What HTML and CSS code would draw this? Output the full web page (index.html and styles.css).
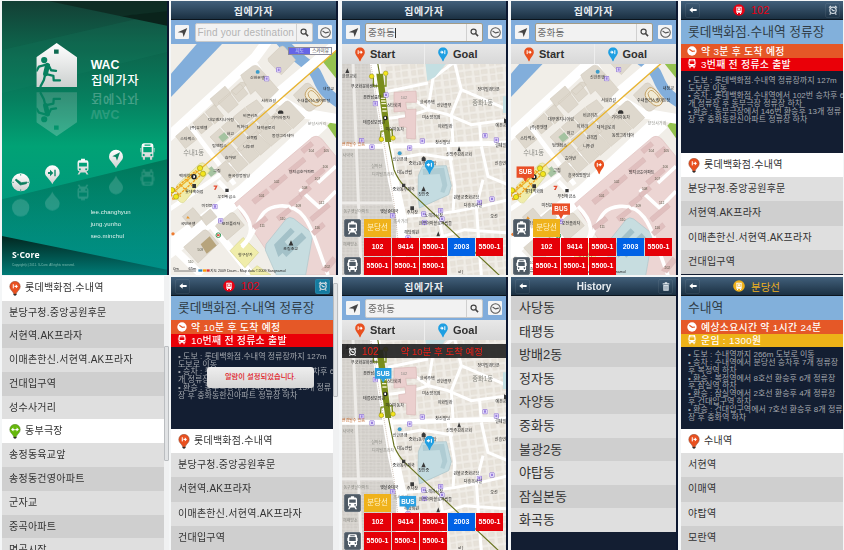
FILE: index.html
```html
<!DOCTYPE html>
<html lang="ko">
<head>
<meta charset="utf-8">
<title>WAC 집에가자</title>
<link rel="stylesheet" href="styles.css">
</head>
<body>
<svg class="defs" width="0" height="0" aria-hidden="true">
  <defs>
    <linearGradient id="green" x1="0" y1="0" x2="0" y2="1"><stop offset="0" stop-color="#143f35"/><stop offset=".15" stop-color="#0e6049"/><stop offset=".36" stop-color="#06805f"/><stop offset=".53" stop-color="#01a275"/><stop offset="1" stop-color="#008d87"/></linearGradient>
    <linearGradient id="shade" x1="0" y1="0" x2="0" y2="1"><stop offset="0" stop-color="#00694e" stop-opacity=".75"/><stop offset="1" stop-color="#009088" stop-opacity=".4"/></linearGradient>
    <linearGradient id="foot" x1="0" y1="0" x2="0" y2="1"><stop offset="0" stop-color="#02261f"/><stop offset="1" stop-color="#007b76"/></linearGradient>
    <linearGradient id="silver" x1="0" y1="0" x2="0" y2="1"><stop offset="0" stop-color="#fff"/><stop offset="1" stop-color="#ccd0cf"/></linearGradient>
    <pattern id="lots" width="23" height="19" patternUnits="userSpaceOnUse"><rect width="23" height="19" fill="#dedbd7"/><path d="M2 2h8v6H2zM13 2h8v7h-8zM2 11h9v6H2zM14 12h7v5h-7z" fill="#d1cec9" stroke="#c5c2bc" stroke-width=".7"/></pattern>
    <pattern id="homes" width="47" height="43" patternUnits="userSpaceOnUse" patternTransform="rotate(-7)"><path d="M3 4h15v14H3zM24 3h18v13H24zM4 24h13v14H4zM24 23h15v15H24z" fill="#e7e2d9" stroke="#dcd6cc" stroke-width="1"/></pattern>
  </defs>
  <symbol id="pin" viewBox="0 0 30 44"><path d="M15 .5A14.5 14.5 0 0 1 29.5 15C29.500 24 20 29 17 40q-2 6-4 0C10 29 .5 24 .5 15A14.500 14.500 0 0 1 15 .5z"/></symbol>
  <symbol id="g-start" viewBox="0 0 20 14"><path d="M3 1h3v12H3zM8 5h4V1l6 6-6 6V9H8z" fill="#fff"/></symbol>
  <symbol id="g-goal" viewBox="0 0 20 14"><path d="M2 5h4V1l6 6-6 6V9H2zM14 1h3v12h-3z" fill="#fff"/></symbol>
  <symbol id="p-start" viewBox="0 0 30 44"><use href="#pin" width="30" height="44" fill="#e9501f"/><use href="#g-start" x="5" y="8" width="20" height="14"/></symbol>
  <symbol id="p-goal" viewBox="0 0 30 44"><use href="#pin" width="30" height="44" fill="#1f9fe2"/><use href="#g-goal" x="5" y="8" width="20" height="14"/></symbol>
  <symbol id="p-list" viewBox="0 0 36 46"><circle cx="18" cy="41" r="4.500" fill="#222"/><path d="M18 1A16 16 0 0 1 34 17C34 27 25 30 21 40h-6C11 30 2 27 2 17A16 16 0 0 1 18 1z" fill="#e9501f" stroke="#81412c" stroke-width="1.500"/><use href="#g-start" x="8" y="9" width="21" height="15"/></symbol>
  <symbol id="p-mid" viewBox="0 0 36 46"><circle cx="18" cy="41" r="4.500" fill="#222"/><path d="M18 1A16 16 0 0 1 34 17C34 27 25 30 21 40h-6C11 30 2 27 2 17A16 16 0 0 1 18 1z" fill="#66b80b" stroke="#4b771d" stroke-width="1.500"/><path d="M6 17l7-6v4h4v4h-4v4zM30 17l-7-6v4h-4v4h4v4z" fill="#fff"/></symbol>
  <symbol id="arrow" viewBox="0 0 30 30"><path d="M28 3L18 27l-3-11L2 14z"/></symbol>
  <symbol id="lens" viewBox="0 0 30 30"><circle cx="12" cy="12" r="8.500" fill="none" stroke="#444" stroke-width="4"/><path d="M18 18l9 9" stroke="#444" stroke-width="5"/></symbol>
  <symbol id="clock" viewBox="0 0 30 30"><circle cx="15" cy="15" r="13" fill="none" stroke="#555" stroke-width="2.800"/><path d="M7 11l8 5 9-2" fill="none" stroke="#555" stroke-width="3"/></symbol>
  <symbol id="clockw" viewBox="0 0 30 30"><circle cx="15" cy="15" r="14" fill="#fff"/><path d="M7 10l9 6 8-1" fill="none" stroke="#e55827" stroke-width="3.500"/></symbol>
  <symbol id="train" viewBox="0 0 34 42"><path d="M12 0h10v4h4q5 0 5 6v17q0 5-5 5l5 8h-5l-3-5H11l-3 5H3l5-8q-5 0-5-5V10q0-6 5-6h4zM7 10v10h20V10zM9 24a2.500 2.500 0 1 0 .1 0zM25 24a2.500 2.500 0 1 0 .1 0z" fill-rule="evenodd"/></symbol>
  <symbol id="bus" viewBox="0 0 34 42"><path d="M8 0h18q5 0 5 6v27h-3v6h-5v-6H11v6H6v-6H3V6q0-6 5-6zM10 3v3h14V3zM7 9v12h20V9zM8 25a2.500 2.500 0 1 0 .1 0zM26 25a2.500 2.500 0 1 0 .1 0z" fill-rule="evenodd"/><path d="M0 11h2v10H0zM32 11h2v10h-2z"/></symbol>
  <symbol id="back" viewBox="0 0 24 18"><path d="M11 1v5h12v6H11v5L1 9z" fill="#fff"/></symbol>
  <symbol id="alarm" viewBox="0 0 30 30"><circle cx="15" cy="16" r="9.500" fill="none" stroke="currentColor" stroke-width="3.500"/><path d="M3 8l6-5M27 8l-6-5M8 25l-3 4M22 25l3 4M11 12l4 5h5" fill="none" stroke="currentColor" stroke-width="3.500"/></symbol>
  <symbol id="trash" viewBox="0 0 24 30"><path d="M8 1h8v3h7v4H1V4h7zM3 10h18v19H3z" fill="#dce4ea"/><path d="M8 13v13M12 13v13M16 13v13" stroke="#33506a" stroke-width="1.300"/></symbol>
  <symbol id="badge" viewBox="0 0 36 36"><circle cx="18" cy="18" r="17.500"/><path d="M10 8h16v18H10zM12 27h3v3h-3zM21 27h3v3h-3z" fill="#fff"/><path d="M13 12h10v7H13z" fill="none" stroke="currentColor" stroke-width="1.800"/></symbol>
  <symbol id="stop" viewBox="0 0 16 16"><rect x="1" y="1" width="14" height="14" rx="2" fill="#efeaff" stroke="#7350c8" stroke-width="2"/><path d="M5 4h6v7H5z" fill="#9a7fe0"/></symbol>
  <symbol id="logo" viewBox="0 0 124 134"><path d="M62 0l62 43v91H0V43zM54 20v13h14V20z" fill-rule="evenodd" fill="url(#silver)"/><g fill="none" stroke="#07805f" stroke-linecap="round" stroke-linejoin="round"><circle cx="24" cy="52" r="5" stroke-width="9"/><path d="M34 68L28 94" stroke-width="15"/><path d="M30 66L8 72 1 84M37 67l8 16 15 2M31 95l21 5 1 14h19M27 96l-4 17-10 19" stroke-width="7"/></g></symbol>
  <symbol id="tag" viewBox="0 0 54 48"><path d="M0 0h54v34H34L27 47 20 34H0z"/></symbol>
</svg>

<main class="board">
  <section class="screen">
    <svg class="fill" viewBox="6 3 495 822" preserveAspectRatio="none">
      <rect x="6" y="3" width="495" height="822" fill="url(#green)"/>
      <path d="M6 150L501 36v120L6 280z" fill="#1b8a68" opacity=".16"/>
      <path d="M145 3h356v34L360 48z" fill="#0e2921" opacity=".85"/><path d="M360 48l141-14v43z" fill="#0a231b"/>
      <path d="M6 598L501 478v330L6 708z" fill="url(#shade)"/>
      <path d="M6 708l495 101v16H6z" fill="url(#foot)"/>
      <use href="#logo" x="109" y="128" width="122" height="134"/>
      <g opacity=".22" transform="translate(0 538) scale(1 -1)"><use href="#logo" x="109" y="128" width="122" height="134"/></g>
      <g fill="#fff"><text class="wac" x="272" y="207">WAC</text><text class="name" x="273" y="255" textLength="143">집에가자</text></g>
      <g fill="#fff" opacity=".25" transform="translate(0 537) scale(1 -1)"><text class="wac" x="272" y="207" opacity=".6">WAC</text><text class="name" x="273" y="255" textLength="143">집에가자</text></g>
      <g fill="url(#silver)">
        <circle cx="62" cy="547" r="27"/><path d="M48 537l16 11 17-2-2 5-18 4-15-14zM62 522v5M62 568v5M37 547h5M82 547h5" fill="#087c5c" stroke="#087c5c" stroke-width="2"/>
        <path d="M157 496a22 22 0 0 1 22 22c0 12-14 17-22 35-8-18-22-23-22-35a22 22 0 0 1 22-22z"/><path d="M144 516h6v-7l10 10-10 10v-7h-6zM163 509h4v20h-4z" fill="#078664"/>
        <use href="#train" x="229" y="474" width="40" height="54"/>
        <path d="M348 449a21 21 0 0 1 21 21c0 12-13 17-21 35-8-18-21-23-21-35a21 21 0 0 1 21-21z"/><path d="M360 457l-9 25-4-11-10-2z" fill="#078664"/>
        <use href="#bus" x="421" y="429" width="43" height="55"/>
      </g>
      <g fill="#fff" opacity=".16">
        <circle cx="62" cy="623" r="26"/>
        <path d="M157 632a22 22 0 0 0 22-22c0-12-14-17-22-35-8 18-22 23-22 35a22 22 0 0 0 22 22zM348 583a21 21 0 0 0 21-21c0-12-13-17-21-35-8 18-21 23-21 35a21 21 0 0 0 21 21z"/>
        <g transform="translate(0 1077) scale(1 -1)"><use href="#train" x="229" y="474" width="40" height="54"/></g><g transform="translate(0 987) scale(1 -1)"><use href="#bus" x="421" y="429" width="43" height="55"/></g>
      </g>
      <g class="crew"><text x="272" y="641" textLength="120">lee.changhyun</text><text x="272" y="677" textLength="91">jung.yunho</text><text x="272" y="713" textLength="100">seo.minchul</text></g>
      <text class="brand" x="36" y="774" textLength="83">S·Core</text>
      <text class="copy" x="36" y="797" textLength="188">Copyright(c) 2011. S-Core. All rights reserved.</text>
    </svg>
  </section>

  <section class="screen">
    <header class="bar">집에가자</header>
    <div class="search"><span class="sq"><svg><use href="#arrow"/></svg></span><div class="field"><span class="hint">Find your destination</span><span class="go"><svg><use href="#lens"/></svg></span></div><span class="sq"><svg><use href="#clock"/></svg></span></div>
    <div class="map">
      <svg class="fill" viewBox="9 132 495 696" preserveAspectRatio="none">
        <g id="map-a">
          <rect x="9" y="130" width="495" height="698" fill="#f1eee8"/>
          <path d="M9 222L88 130h76L9 292z" fill="#82aedb"/>
          <path d="M330 110C395 195 430 185 450 235S490 290 530 320" fill="none" stroke="#82aedb" stroke-width="34"/>
          <path d="M464 185l40-40v90zM478 378l26-28v66z" fill="#94c24f"/>
          <g fill="none" stroke="#fff" stroke-linejoin="round">
            <path d="M-10 422L262 172 300 120" stroke-width="30"/>
            <path d="M245 180L318 290 400 340 520 360M318 290L520 120" stroke-width="30"/>
            <path d="M-10 760L230 578 460 365" stroke-width="52"/>
            <path d="M-10 640L150 530 330 350M70 385l130 170M150 545l290 300" stroke-width="14"/>
            <path d="M-10 720L100 828M110 650l140 178" stroke-width="22"/>
          </g>
          <path d="M200 612L432 414q15-10 30 5l42 52v357H345z" fill="#ecd5d3" stroke="#dfc0be" stroke-width="2"/>
          <g fill="#ded8cd" stroke="#cec6b9" stroke-width="1.500">
            <path d="M126 298l45-39 18 22-45 40zM189 273l28-25q12-5 18 7l-31 30zM75 370l33-29 26 33-34 29zM112 337l27-23 28 35-27 24zM150 309l35-30 26 35-30 26zM188 276l29-24 23 30-28 25zM23 410l33-29 31 38-35 28zM300 176l36-35q9-7 16 2l31 37-43 45-38-40zM218 226l35-27q13-7 22 5l57 66-38 38-32-36-14 12zM376 286l35-34q10-6 18 3l44 46-42 32q-9 5-18-3z"/>
            <path d="M126 412l30-26 26 30-28 26zM160 382l32-27 27 32-32 27zM196 352l34-28 25 31-32 27zM233 322l33-22 21 25-30 27zM152 452l30-25 31 36-32 26zM189 420l31-25 28 32-29 27zM225 389l30-26 27 32-29 25zM261 358l30-26 26 31-28 25zM325 330l27-24q8-6 15 2l43 46-35 33-51-53zM295 363l29-24 47 48-30 26zM265 392l28-23 47 45-31 26zM237 419l27-23 43 45-30 26zM207 448l29-25 38 44-29 25zM175 477l29-24 37 41-30 26zM145 508l28-24 34 38-29 26z"/>
            <path d="M43 652l32-27 28 33-32 28zM142 680l44-38q8-5 15 2l28 34-52 45zM47 744l58-50q8-5 15 2l32 37-62 59zM97 655l30-26 20 24-32 26z"/>
          </g>
          <path d="M151 412l18-14 13 16-18 14zM113 514l18-14 15 20-17 13z" fill="#a5c3a1"/>
          <path d="M98 735l27-24 21 28-30 25z" fill="#b7a47c"/>
          <path d="M26 558l70-66q9-6 17 3l13 18-74 92q-10 12-22-3zM186 755l39-40 47 45-41 46zM245 820l22-20 42 28h-60z" fill="#f0edaa" stroke="#d8d58e" stroke-width="2"/>
          <path d="M294 735l60-75q10-10 23-2l48 38q9 7 8 17l-20 115h-88l-33-75z" fill="#c7dde0" stroke="#adc6ca" stroke-width="2"/>
          <path d="M318 737l50-51 12 12-30 30 9 10 42-38 14 16-60 58-11-12-13 12z" fill="#a3c1c8"/>
          <path d="M210 620Q280 690 220 740M222 745C280 690 260 626 335 620S430 690 452 750L480 828M395 570l60 55 49-50M450 550l54-50" fill="none" stroke="#fff" stroke-width="11"/>
          <path fill="#e0bfbe" stroke="#cfaead" d="M251 602l44-34 9 12-43 35zM304 562l46-38 9 11-44 38zM360 510l45-37 9 12-44 37zM398 450l30-24 9 11-29 25zM440 462l28-22 9 12-28 23zM392 583l30-25 9 11-30 25zM413 545l50-42 9 12-49 42zM362 610l32-25 9 12-32 25zM253 680l38-30 9 12-38 30zM325 653l36-28 9 11-36 29zM425 655l53-45 9 12-53 45zM430 697l33-28 9 12-33 28zM460 812l34-40 12 12-29 36z"/>
          <path d="M412 280q10-25 26-12 34 30 22 45-14 14-32-5-20-14-16-28zm8 2q6-16 18-6 22 20 15 29-8 8-19-3-15-10-14-20z" fill="#f1ead4" stroke="#c7a469" stroke-width="3"/>
          <path d="M9 585L70 533 520 138" fill="none" stroke="#e9b42e" stroke-width="4"/>
          <path d="M8 580l75-66 15 13-82 75zM20 572l18 20M38 556l18 20M56 540l16 20" fill="none" stroke="#f1a21c" stroke-width="4" stroke-dasharray="8 3"/>
          <g class="exit"><circle cx="96" cy="506" r="8"/><circle cx="105" cy="523" r="8"/><circle cx="24" cy="592" r="8"/><circle cx="12" cy="572" r="8"/></g>
          <circle cx="78" cy="532" r="8" fill="#222"/><path d="M75 528h6v7h-6z" fill="#fff"/>
          <use href="#stop" x="324" y="202" width="16" height="16"/><use href="#stop" x="288" y="229" width="16" height="16"/><use href="#stop" x="133" y="614" width="16" height="16"/><use href="#stop" x="150" y="657" width="16" height="16"/>
          <circle cx="269" cy="216" r="6" fill="#3c9cc9"/><path d="M330 342v-6l4-4h8l4 4v6zM73 554h11v12H73zM362 739h14l-7-16zM172 568h10v10h-10z" fill="#333"/>
          <path d="M137 558h12l-6 13h-5l5-9h-6z" fill="#e54a2e"/><circle cx="151" cy="708" r="7" fill="#fff" stroke="#349553" stroke-width="3"/><path d="M147 705h8v6h-8z" fill="#d54"/><circle cx="15" cy="704" r="5" fill="#ee7b30"/><path d="M55 658l4-8 7 8z" fill="#e9952c"/>
          <g class="labels">
            <text x="268" y="238">신한은행</text><text x="302" y="308">서희건설</text><text x="247" y="352">비콘위즈</text><text x="159" y="365">대우엔지니어링</text><text x="338" y="358">기아자동차</text><text x="92" y="388">(주)유앤엘</text><text x="223" y="384">이화리</text><text x="294" y="388">대덕글로리</text><text x="187" y="407">허고</text><text x="59" y="422">스타벅스</text><text x="252" y="419">원목집</text><text x="345" y="411">동양그라테아</text><text x="155" y="442">탐앤탐스</text><text x="242" y="446">니뚜란</text><text x="187" y="480">효아반</text><text x="147" y="518">그집</text><text x="213" y="532">흥국생명빌딩</text><text x="56" y="534">백제약국</text><text x="79" y="580">롯데백화점</text><text x="176" y="595">우전취금소</text><text x="117" y="622">미전문</text><text x="60" y="676">국민은행</text><text x="189" y="676">오전플라자</text><text x="481" y="270">내정교</text><text x="437" y="307">수내플러스케이트장</text><text x="401" y="522">양지금호아파트</text><text x="368" y="752">초림초교</text><text x="232" y="771">형구상가</text>
            <g class="faint"><text x="447" y="377">분당사거리</text><text x="77" y="465" font-size="19">수내1동</text></g>
            <g class="nums"><text x="430" y="456">104</text><text x="475" y="456">105</text><text x="472" y="506">106</text><text x="448" y="541">107</text><text x="410" y="570">108</text><text x="326" y="551">102</text><text x="281" y="592">101</text><text x="461" y="613">112</text><text x="391" y="622">109</text><text x="344" y="663">110</text><text x="283" y="684">111</text><text x="448" y="688">116</text><text x="97" y="757">509</text><text x="68" y="793">510</text><text x="478" y="807">202</text></g>
            <text x="24" y="812">0m</text><text x="73" y="812">65m</text><text x="240" y="819" textLength="226" lengthAdjust="spacingAndGlyphs">지도 2009 Daum - Map data ©2009 Sangnamul</text>
          </g>
          <path d="M18 816h66" stroke="#444" stroke-width="2"/><path d="M91 811h12v7H91z" fill="#38b"/><path d="M105 811h10v7h-10z" fill="#f90"/><path d="M116 811h9v7h-9z" fill="#d33"/>
        </g>
      </svg>
      <div class="mode"><b>지도</b><span>스카이뷰</span></div>
    </div>
  </section>

  <section class="screen">
    <header class="bar">집에가자</header>
    <div class="search"><span class="sq"><svg><use href="#arrow"/></svg></span><div class="field focus"><span class="typed caret">중화동</span><span class="go"><svg><use href="#lens"/></svg></span></div><span class="sq"><svg><use href="#clock"/></svg></span></div>
    <div class="ends"><span><svg><use href="#p-start"/></svg>Start</span><span><svg><use href="#p-goal"/></svg>Goal</span></div>
    <div class="map">
      <svg class="fill" viewBox="12 193 495 633" preserveAspectRatio="xMinYMin slice">
        <g id="map-b">
          <rect x="10" y="190" width="500" height="640" fill="#f0ede7"/>
          <path d="M140 190h370v640H200z" fill="url(#homes)"/>
          <path d="M10 190h90l75 470 5 170H10z" fill="url(#lots)"/>
          <path d="M10 440h160M10 610h160M45 190l25 640" stroke="#eeece9" stroke-width="9"/>
          <g fill="none" stroke="#fff">
            <path d="M110 185L148 430 165 540 192 660 186 835" stroke-width="31"/>
            <path d="M10 440h140L510 430" stroke-width="15"/>
            <path d="M152 356Q220 350 270 330L330 345 400 375 510 360M215 290L270 330 285 235 345 190M150 275L270 250M340 345L345 430M425 375L430 435M205 650Q350 645 510 600M330 440L350 560 345 640M430 440L450 530 510 555M435 540L415 620 430 830M300 640L320 740 310 830M205 720L300 715 380 690 510 700M350 190l20 80 140 60M370 270l-30 75M165 478l85-15 95 15" stroke-width="9"/>
          </g>
          <path d="M262 190h64l-35 42-23 12zM495 290h15v50h-15z" fill="#c4dfe2"/>
          <path d="M168 278l66-4 2 34h-33l3 22 28-2-2 90-26-2v-33l-22-3-2-23 21-3-2-20-33 3z" fill="#ebcfce" stroke="#dab8b7" stroke-width="2"/>
          <path d="M241 528l12-28 72-2 15 60-8 27-88 40-4-38z" fill="#c4dce1" stroke="#a9c2c9" stroke-width="2"/>
          <path d="M254 508l64-4 10 53-9 23-12-4 6-19-8-34-50 3z" fill="#afccd3"/>
          <path d="M98 190l20 120 50 300 12 110" fill="none" stroke="#a2856d" stroke-width="1.500" stroke-dasharray="3 3"/>
          <path d="M119 190L125 225 150 420 168 510Q180 540 200 560L500 842" fill="none" stroke="#68731f" stroke-width="3.500"/>
          <path d="M115 222h20l25 205h-18z" fill="#7a8d1c"/>
          <path d="M106 234v25h38v-30M127 420l2-25 33-5 2 24" fill="none" stroke="#7a8d1c" stroke-width="4"/>
          <path d="M128 296h14M129 304h14M130 312h14M132 324h13M133 334h13" stroke="#f2f2cf" stroke-width="4"/><circle cx="142" cy="355" r="7" fill="#222"/><path d="M139 351h5v7h-5z" fill="#fff"/>
          <g class="exit"><circle cx="101" cy="230" r="7"/><circle cx="143" cy="221" r="7"/><circle cx="130" cy="419" r="7"/><circle cx="165" cy="415" r="7"/></g>
          <use href="#stop" x="136" y="278" width="16" height="16"/><use href="#stop" x="104" y="304" width="16" height="16"/><use href="#stop" x="63" y="415" width="16" height="16"/><use href="#stop" x="94" y="434" width="16" height="16"/><use href="#stop" x="207" y="437" width="16" height="16"/><use href="#stop" x="245" y="416" width="16" height="16"/><use href="#stop" x="433" y="400" width="16" height="16"/><use href="#stop" x="467" y="413" width="16" height="16"/><use href="#stop" x="454" y="590" width="16" height="16"/><use href="#stop" x="416" y="600" width="16" height="16"/><use href="#stop" x="300" y="625" width="16" height="16"/><use href="#stop" x="249" y="635" width="16" height="16"/><use href="#stop" x="304" y="650" width="16" height="16"/><use href="#stop" x="252" y="660" width="16" height="16"/><use href="#stop" x="156" y="640" width="16" height="16"/><use href="#stop" x="202" y="707" width="16" height="16"/>
          <circle cx="185" cy="461" r="6" fill="#3c9cc9"/>
          <path d="M22 220h12l-6-14zM358 455h11l-6-15zM251 484v-9l6-5 6 5v9zM250 575h13l-6-15zM192 552h10v10h-10zM217 620h11v11h-11zM295 710h11l-5-15zM498 370v-14l8 4v10z" fill="#3a3a3a"/>
          <g class="labels">
            <text x="34" y="234">한은교회</text><text x="78" y="266">우궁화문화센터</text><text x="103" y="298">운전납품타</text><text x="168" y="322">스타회치</text><text x="108" y="374">태릉성모병원</text><text x="170" y="394">미여자동차</text><text x="268" y="312">한석주택</text><text x="318" y="323">신한플부</text><text x="280" y="359">미소양복점</text><text x="321" y="385">이화빌라</text><text x="452" y="274">장미빌라타운</text><text x="489" y="381">예은교</text><text x="314" y="433">창신빌딩</text><text x="488" y="441">결제빌</text><text x="363" y="468">신망주감리교회</text><text x="186" y="483">신한은행</text><text x="254" y="497">중화1동우체국타</text><text x="200" y="524">대능연립</text><text x="197" y="575">중화동우체국</text><text x="257" y="589">장안중</text><text x="385" y="597">원불교중화교당</text><text x="405" y="621">다홍옥사일</text><text x="223" y="644">주차장</text><text x="287" y="652">노해저시장</text><text x="154" y="640">옛날순대국</text><text x="292" y="676">한무아마블로사립들</text><text x="468" y="655">오선</text><text x="487" y="497">신흥연</text><text x="221" y="704">해당의원</text>
            <g class="faint"><text x="46" y="440" fill="#c46c33">변경될수 있음</text><text x="30" y="472">사약국</text><text x="116" y="504">실악산</text><text x="135" y="528">디지털프라자</text><text x="55" y="641">동구옛날아파트</text><text x="188" y="669">옥사거리</text><text x="37" y="739">해배양소</text><text x="198" y="298">102</text><text x="434" y="316" font-size="19">중화1동</text></g>
            <text x="368" y="819">ul )</text>
          </g>
        </g>
        <use href="#p-goal" x="258" y="480" width="33" height="45"/>
      </svg>
      <div class="lines"><i><svg><use href="#train"/></svg></i><b class="gold">분당선</b><b class="r2">102</b><b>9414</b><b>5500-1</b><b class="blue">2003</b><b>5500-1</b><i><svg><use href="#bus"/></svg></i><b>5500-1</b><b>5500-1</b><b>5500-1</b></div>
    </div>
  </section>

  <section class="screen">
    <header class="bar">집에가자</header>
    <div class="search"><span class="sq"><svg><use href="#arrow"/></svg></span><div class="field focus"><span class="typed">중화동</span><span class="go"><svg><use href="#lens"/></svg></span></div><span class="sq"><svg><use href="#clock"/></svg></span></div>
    <div class="ends"><span><svg><use href="#p-start"/></svg>Start</span><span><svg><use href="#p-goal"/></svg>Goal</span></div>
    <div class="map">
      <svg class="fill" viewBox="9 193 495 633" preserveAspectRatio="xMinYMin slice"><use href="#map-a"/><use href="#p-start" x="257" y="480" width="33" height="45"/><g fill="#e94f27"><use href="#tag" x="25" y="500" width="54" height="48"/><use href="#tag" x="132" y="611" width="54" height="48"/></g><text class="tagtext" x="52" y="524">SUB</text><text class="tagtext" x="159" y="635">BUS</text></svg>
      <div class="lines"><i><svg><use href="#train"/></svg></i><b class="gold">분당선</b><b class="r2">102</b><b>9414</b><b>5500-1</b><b class="blue">2003</b><b>5500-1</b><i><svg><use href="#bus"/></svg></i><b>5500-1</b><b>5500-1</b><b>5500-1</b></div>
    </div>
  </section>

  <section class="screen last">
    <header class="bar route"><span class="tool"><svg><use href="#back"/></svg></span><span class="who red"><svg><use href="#badge"/></svg>102</span><span class="tool"><svg class="al"><use href="#alarm"/></svg></span></header>
    <h2>롯데백화점.수내역 정류장</h2>
    <p class="info orange"><svg><use href="#clockw"/></svg>약 3분 후 도착 예정</p>
    <p class="info scarlet"><svg><use href="#bus"/></svg>3번째 전 정류소 출발</p>
    <div class="steps">• 도보 : 롯데백화점.수내역 정류장까지 127m<br>도보로 이동<br>• 승차 : 롯데백화점.수내역에서 102번 승차후 6<br>개 정류장 후 동부극장 정류장 하차<br>• 환승 : 동부극장에서 146번 환승후 13개 정류<br>장 후 중화동한신아파트 정류장 하차</div>
    <ul class="stops"><li class="hub"><svg><use href="#p-list"/></svg>롯데백화점.수내역</li><li>분당구청.중앙공원후문</li><li>서현역.AK프라자</li><li>이매촌한신.서현역.AK프라자</li><li>건대입구역</li></ul>
  </section>

  <section class="screen scrolled route-list">
    <ul class="stops"><li class="hub"><svg><use href="#p-list"/></svg>롯데백화점.수내역</li><li>분당구청.중앙공원후문</li><li>서현역.AK프라자</li><li>이매촌한신.서현역.AK프라자</li><li>건대입구역</li><li>성수사거리</li><li class="hub"><svg><use href="#p-mid"/></svg>동부극장</li><li>송정동육교앞</li><li>송정동건영아파트</li><li>군자교</li><li>중곡아파트</li><li>면곡시장</li></ul>
    <div class="track"><span class="thumb low"></span></div>
  </section>

  <section class="screen scrolled">
    <div class="page">
      <header class="bar route"><span class="tool"><svg><use href="#back"/></svg></span><span class="who red"><svg><use href="#badge"/></svg>102</span><span class="tool lit"><svg class="al"><use href="#alarm"/></svg></span></header>
      <h2>롯데백화점.수내역 정류장</h2>
      <p class="info orange"><svg><use href="#clockw"/></svg>약 10분 후 도착 예정</p>
      <p class="info scarlet"><svg><use href="#bus"/></svg>10번째 전 정류소 출발</p>
      <div class="steps">• 도보 : 롯데백화점.수내역 정류장까지 127m<br>도보로 이동<br>• 승차 : 롯데백화점.수내역에서 102번 승차후 6<br>개 정류장 후 동부극장 정류장 하차<br>• 환승 : 동부극장에서 146번 환승후 13개 정류<br>장 후 중화동한신아파트 정류장 하차<div class="toast">알람이 설정되었습니다.</div></div>
      <ul class="stops"><li class="hub"><svg><use href="#p-list"/></svg>롯데백화점.수내역</li><li>분당구청.중앙공원후문</li><li>서현역.AK프라자</li><li>이매촌한신.서현역.AK프라자</li><li>건대입구역</li></ul>
    </div>
    <div class="track"><span class="thumb high"></span></div>
  </section>

  <section class="screen">
    <header class="bar">집에가자</header>
    <div class="search"><span class="sq"><svg><use href="#arrow"/></svg></span><div class="field"><span class="typed">중화동</span><span class="go"><svg><use href="#lens"/></svg></span></div><span class="sq"><svg><use href="#clock"/></svg></span></div>
    <div class="ends"><span><svg><use href="#p-start"/></svg>Start</span><span><svg><use href="#p-goal"/></svg>Goal</span></div>
    <div class="map">
      <svg class="fill" viewBox="12 193 495 630" preserveAspectRatio="xMinYMin slice"><use href="#map-b"/><use href="#p-goal" x="258" y="480" width="33" height="45"/><g fill="#2b9fe0"><use href="#tag" x="110" y="277" width="51" height="46"/><use href="#tag" x="184" y="660" width="51" height="46"/></g><text class="tagtext" x="135.500" y="301">SUB</text><text class="tagtext" x="209.500" y="684">BUS</text></svg>
      <div class="notice"><svg><use href="#alarm"/></svg><span>102</span><span class="eta">약 10분 후 도착 예정</span></div>
      <div class="lines"><i><svg><use href="#train"/></svg></i><b class="gold">분당선</b><b class="r2">102</b><b>9414</b><b>5500-1</b><b class="blue">2003</b><b>5500-1</b><i><svg><use href="#bus"/></svg></i><b>5500-1</b><b>5500-1</b><b>5500-1</b></div>
    </div>
  </section>

  <section class="screen">
    <header class="bar route"><span class="tool"><svg><use href="#back"/></svg></span><span class="latin">History</span><span class="tool"><svg class="tr"><use href="#trash"/></svg></span></header>
    <ul class="history"><li>사당동</li><li>태평동</li><li>방배2동</li><li>정자동</li><li>자양동</li><li>중화동</li><li>불광2동</li><li>야탑동</li><li>잠실본동</li><li>화곡동</li></ul>
  </section>

  <section class="screen last">
    <header class="bar route"><span class="tool"><svg><use href="#back"/></svg></span><span class="who amber"><svg><use href="#badge"/></svg>분당선</span></header>
    <h2>수내역</h2>
    <p class="info orange"><svg><use href="#clockw"/></svg>예상소요시간 약 1시간 24분</p>
    <p class="info yellow"><svg><use href="#bus"/></svg>운임 : 1300원</p>
    <div class="steps long">• 도보 : 수내역까지 266m 도보로 이동<br>• 승차 : 수내역에서 분당선 승차후 7개 정류장<br>후 복정역 하차<br>• 환승 : 복정역에서 8호선 환승후 6개 정류장<br>후 잠실역 하차<br>• 환승 : 잠실역에서 2호선 환승후 4개 정류장<br>후 건대입구역 하차<br>• 환승 : 건대입구역에서 7호선 환승후 8개 정류<br>장 후 중화역 하차</div>
    <ul class="stops"><li class="hub"><svg><use href="#p-list"/></svg>수내역</li><li>서현역</li><li>이매역</li><li>야탑역</li><li>모란역</li></ul>
  </section>
</main>
</body>
</html>
```
FILE: styles.css
```css
* { box-sizing: border-box; }
body { margin: 0; background: #f4f6f7; font-family: "Liberation Sans", "Noto Sans CJK KR", sans-serif; color: #333; }
ul, h2, p { margin: 0; padding: 0; list-style: none; font-weight: 400; }
.defs { position: absolute; }
.board { width: 844px; height: 550px; overflow: hidden; padding: 1px 0 0 2px; display: grid; grid-template-columns: 169px 171px 169px 170px 163px; grid-template-rows: 274px 273px; row-gap: 2px; }
.screen { width: 165px; display: flex; flex-direction: column; background: #131e32; box-shadow: 2px 0 #0c1730; min-height: 0; white-space: nowrap; }
.screen.last { width: 162px; box-shadow: none; overflow: hidden; }
.screen:nth-child(3), .screen:nth-child(8) { width: 164px; }
.fill { display: block; width: 100%; height: 100%; }

.bar { height: 19px; flex: none; display: flex; align-items: center; justify-content: center; background: linear-gradient(#42607b, #1b3042); border-bottom: 1px solid #0c151e; color: #e8edf1; font-size: 10px; font-weight: 700; letter-spacing: .7px; }
.route { display: grid; grid-template-columns: 15px 1fr 15px; padding: 0 3px 0 4px; letter-spacing: 0; }
.tool { height: 15px; border: 1px solid #ffffff12; border-radius: 2px; display: grid; place-items: center; }
.tool svg { width: 8px; height: 6px; }
.tool .al { width: 10px; height: 10px; color: #d3dbe2; }
.tool .tr { width: 8px; height: 9px; }
.lit { background: #147ba0; }
.who { display: flex; align-items: center; gap: 6px; padding-left: 33px; font-size: 11px; font-weight: 400; }
.who svg { width: 12px; height: 12px; fill: currentColor; }
.red { color: #e60012; }
.amber { color: #edb01d; font-size: 10.500px; }
.latin { text-align: center; font-size: 10px; }

.search { height: 24px; flex: none; display: flex; align-items: center; justify-content: space-between; padding: 0 4px; background: #80acdb; }
.sq { width: 14px; height: 14px; background: #f4f4f4; border-radius: 1px; display: grid; place-items: center; }
.sq svg { width: 11px; height: 11px; fill: #454545; }
.field { width: 118px; height: 19px; display: flex; background: #f2f2f2; border: 1px solid #c7c9ca; border-radius: 2px; overflow: hidden; font-size: 10px; line-height: 17px; color: #555; }
.focus { border-color: #a29b86; }
.hint, .typed { flex: 1; padding-left: 2px; color: #b4b4b4; letter-spacing: .18px; }
.typed { color: #666; font-size: 9.6px; }
.caret::after { content: ""; display: inline-block; height: 10px; border-left: 1px solid #333; vertical-align: -2px; }
.go { width: 16px; border-left: 1px solid #d0d0d0; display: grid; place-items: center; }
.go svg { width: 9px; height: 9px; }
.ends { height: 20px; flex: none; display: grid; grid-template-columns: 1fr 1fr; background: linear-gradient(#e8e8e8, #d8d8d8); font-size: 11px; font-weight: 700; color: #303030; }
.ends span { display: flex; align-items: center; gap: 5px; padding-left: 13px; }
.ends span + span { border-left: 1px solid #eee; }
.ends svg { width: 10px; height: 15px; }

.map { position: relative; flex: 1; min-height: 0; overflow: hidden; }
.mode { position: absolute; top: 3px; right: 4px; width: 44px; height: 8px; display: grid; grid-template-columns: 1fr 1fr; text-align: center; font-size: 4.500px; line-height: 6px; background: #fff; border: 1px solid #8b8b99; }
.mode b { background: #6565e6; color: #e7e7ff; font-weight: 400; }
.lines { position: absolute; left: 2px; bottom: 0; display: grid; grid-template-columns: 19px repeat(5, 27px); gap: 1px; grid-auto-rows: 18px; }
.lines i { grid-column: 1; width: 17px; height: 18px; border-radius: 2px; background: #4e5a65; border: 1px solid #68737d; display: grid; place-items: center; }
.lines i svg { width: 11px; height: 14px; fill: #fff; }
.lines b { background: #e50008; color: #fff; font-size: 7px; line-height: 18px; text-align: center; }
.lines .gold { grid-column: 2; background: #efb21b; color: #fff4ce; font-size: 7.500px; font-weight: 400; }
.lines .r2 { grid-column: 2; }
.lines .blue { background: #0062e6; }
.notice { position: absolute; top: 4px; left: 0; right: 0; height: 14px; display: flex; align-items: center; padding-left: 6px; background: #202020e8; color: #ec2018; font-size: 10px; }
.notice svg { width: 9px; height: 9px; color: #fff; margin-right: 5px; }
.notice .eta { margin-left: 22px; font-size: 9.500px; }

h2 { height: 24px; flex: none; padding-left: 7px; background: #82b0db; font-size: 12.800px; line-height: 24px; color: #303c45; }
.info { height: 13.500px; flex: none; display: flex; align-items: center; gap: 4px; padding-left: 6px; color: #fff; font-size: 9.900px; font-weight: 500; letter-spacing: .3px; }
.info svg { width: 10px; height: 10px; fill: #fff; }
.orange { background: #e55827; }
.scarlet { background: #ea0008; }
.yellow { background: #edb218; }
.steps { position: relative; height: 82px; flex: none; padding: 6px 0 0 7px; font-size: 8px; line-height: 7.700px; color: #a4a8ae; }
.long { padding-top: 4px; line-height: 7.850px; }
.toast { position: absolute; left: 36px; top: 20px; width: 107px; height: 21px; border-radius: 3px; background: linear-gradient(#eee, #d5d5d5); color: #e02028; font-size: 7.300px; font-weight: 500; line-height: 20px; text-align: center; }
.stops { flex: 1; min-height: 0; overflow: hidden; font-size: 10px; letter-spacing: .25px; }
.stops li { height: 24.200px; line-height: 24px; padding-left: 7px; background: #dfdfdf; }
.stops li:nth-child(odd) { background: #cfcfcf; }
.stops li.hub { display: flex; align-items: center; gap: 4px; background: #fff; }
.stops svg { width: 12px; height: 15px; }

.scrolled { flex-direction: row; width: 168px; background: #f0f1f2; box-shadow: none; overflow: hidden; }
.page { width: 162px; display: flex; flex-direction: column; background: #131e32; overflow: hidden; }
.route-list { margin-top: -1px; width: 167px; }
.route-list .stops li { height: 23.800px; }
.route-list .stops .hub:first-child { height: 24.500px; }
.track { width: 5px; flex: none; display: flex; flex-direction: column; }
.thumb { border: 1px solid #babdc0; background: #e1e3e5; border-radius: 1px; }
.low { margin-top: 70px; height: 115px; }
.high { margin-top: 6px; height: 114px; }

.history { font-size: 13px; }
.history li { height: 23.600px; line-height: 23px; padding-left: 8px; background: #cfcfcf; }
.history li:nth-child(even) { background: #dfdfdf; }

.labels { font-size: 12px; text-anchor: middle; fill: #222; }
.faint { fill: #8c8c86; }
.nums { font-size: 10px; fill: #554; }
.exit { fill: #f3e51c; stroke: #8a8414; stroke-width: 1.500px; }
.tagtext { font-size: 19px; font-weight: 700; text-anchor: middle; fill: #fff; }
.wac { font-size: 37px; font-weight: 700; }
.name { font-size: 37px; font-weight: 500; }
.crew { font-size: 18px; fill: #e3f3ef; }
.brand { font-family: "Open Sans", sans-serif; font-size: 26px; font-weight: 700; fill: #fff; }
.copy { font-size: 9px; fill: #7dbcb1; }
```
